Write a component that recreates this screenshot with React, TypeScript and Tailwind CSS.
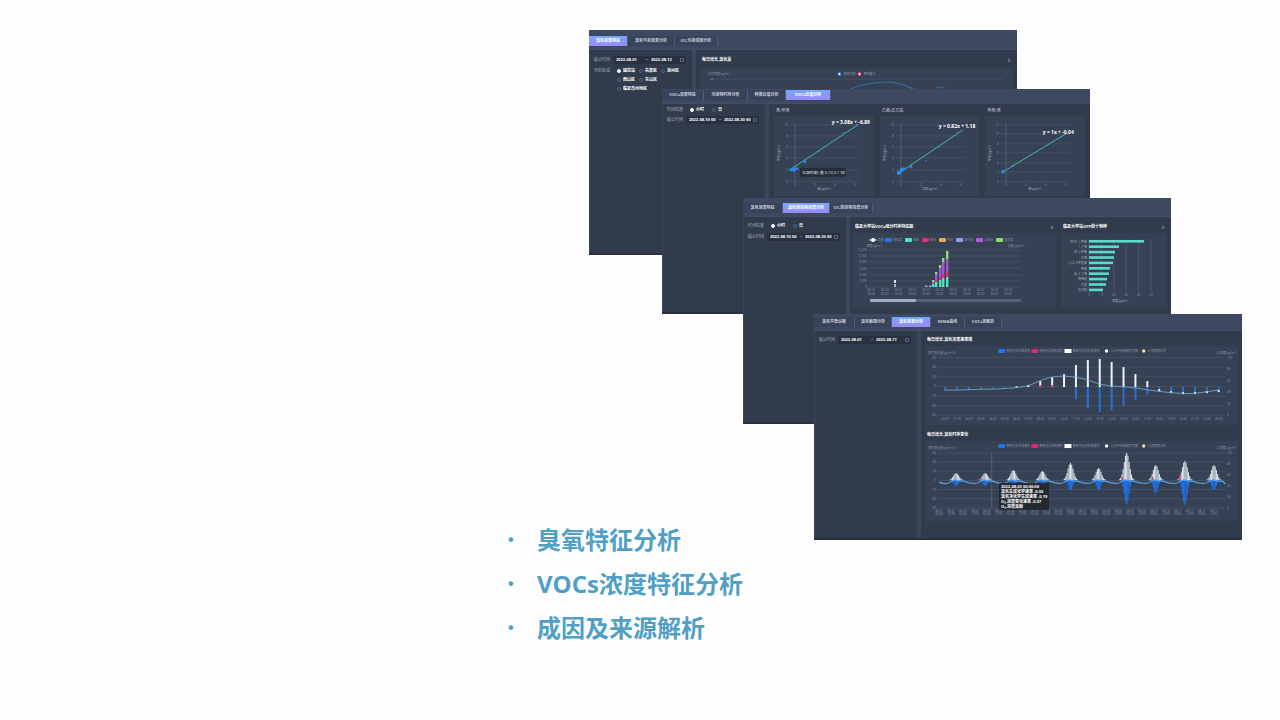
import React from 'react';

const topics = ['臭氧特征分析', 'VOCs浓度特征分析', '成因及来源解析'];

interface Tab {
  label: string;
  width: string;
}

interface WindowProps {
  /** Position of the window on the canvas */
  place: string;
  headPadding: string;
  sidebarSpacing: string;
  tabs: Tab[];
  active: number;
  sidebar: React.ReactNode;
  children: React.ReactNode;
}

/** One dashboard window: tab strip, filter sidebar and a chart area. */
const DashboardWindow: React.FC<WindowProps> = ({ place, headPadding, sidebarSpacing, tabs, active, sidebar, children }) => (
  <section className={`absolute flex w-[428px] flex-col overflow-hidden border-b-2 border-[#2a3040] bg-[#313b4c] text-[4px] leading-[8px] text-white ${place}`}>
    <header className={`border-b border-[#434d63] bg-[#3e4961] pb-[3px] ${headPadding}`}>
      <nav className="flex h-[10px]">
        {tabs.map((tab, i) => (
          <button
            key={tab.label}
            className={`h-full shrink-0 whitespace-nowrap border-r border-[#545c72] font-bold ${tab.width} ${
              i === active ? 'bg-linear-to-b from-[#6fa8fa] to-[#9c86f8]' : 'bg-[#38425a] text-[#c8cdd8]'
            }`}
          >
            {tab.label}
          </button>
        ))}
      </nav>
    </header>
    <div className="flex min-h-0 grow">
      <aside className={`flex w-[103px] shrink-0 flex-col border-l border-[#3b4559] pl-[4px] pr-[6px] ${sidebarSpacing}`}>{sidebar}</aside>
      <div className="w-[4px] shrink-0 bg-[#3d475a]" />
      <div className="min-w-0 grow">{children}</div>
    </div>
  </section>
);

interface DateRangeProps {
  id: string;
  label: string;
  from: string;
  to: string;
}

const DateRange: React.FC<DateRangeProps> = ({ id, label, from, to }) => (
  <div className="flex h-[12px] items-center gap-[3px]">
    <label htmlFor={id} className="w-[16px] shrink-0 text-[#a9b0bf]">{label}</label>
    <div className="flex h-[8px] grow items-center rounded-[1px] bg-[#293140] pl-[3px] font-bold">
      <input id={id} className="w-[30px] bg-transparent" defaultValue={from} />
      <span className="w-[5px] text-[#a9b0bf]">~</span>
      <input aria-label={`${label} 结束`} className="w-[29px] bg-transparent" defaultValue={to} />
      <svg viewBox="0 0 6 6" className="h-[4px] w-[4px]" fill="none" stroke="#7d879a">
        <rect x="1" y="1" width="4" height="4" />
      </svg>
    </div>
  </div>
);

interface RadioRowProps {
  name: string;
  label?: string;
  options: string[];
  checked?: number;
}

const RadioRow: React.FC<RadioRowProps> = ({ name, label, options, checked }) => (
  <div className="flex h-[9px] items-center gap-[6px]">
    <span className="w-[17px] shrink-0 whitespace-nowrap text-[#a9b0bf]">{label}</span>
    <div className="flex">
      {options.map((option, i) => (
        <label key={option} className="flex w-[22px] items-center gap-[2px] whitespace-nowrap font-bold">
          <input
            type="radio"
            name={name}
            defaultChecked={i === checked}
            className="h-[4px] w-[4px] shrink-0 appearance-none rounded-full border border-[#596377] checked:border-white checked:bg-white"
          />
          {option}
        </label>
      ))}
    </div>
  </div>
);

interface LabelProps {
  x: number;
  y: number;
  children: React.ReactNode;
  anchor?: 'start' | 'middle' | 'end';
  size?: number;
  fill?: string;
}

const Label: React.FC<LabelProps> = ({ x, y, children, anchor = 'start', size = 3, fill = '#8b94a6' }) => (
  <text x={x} y={y} fontSize={size} fill={fill} textAnchor={anchor} dominantBaseline="central">{children}</text>
);

const GridLines: React.FC<{ x1: number; x2: number; ys: number[] }> = ({ x1, x2, ys }) => (
  <g stroke="#4a5467" strokeWidth="0.8">
    {ys.map((y) => <line key={y} x1={x1} x2={x2} y1={y} y2={y} />)}
  </g>
);

const PanelTitle: React.FC<{ children: React.ReactNode; icon?: boolean }> = ({ children, icon }) => (
  <div className="flex h-[8px] items-center justify-between px-[2px]">
    <h2 className="whitespace-nowrap font-bold">{children}</h2>
    {icon && (
      <svg viewBox="0 0 6 6" className="h-[4px] w-[4px]" stroke="#8f99b5" fill="none">
        <path d="M3 0.5V4M1.5 2.5L3 4L4.5 2.5M1 5.5H5" />
      </svg>
    )}
  </div>
);

/* ---------- Ozone growth ---------- */

const OzoneChart: React.FC = () => (
  <svg viewBox="700 68 312 60" className="w-full bg-[#364153]">
    <Label x={708} y={74}>日均浓度(μg/m³)</Label>
    <GridLines x1={708} x2={1002} ys={[79, 90]} />
    <circle cx="712" cy="79" r="1" fill="#6d788c" />
    <circle cx="839" cy="74" r="1.5" fill="#fff" stroke="#3b63e8" />
    <Label x={843} y={74}>臭氧均值</Label>
    <circle cx="859" cy="74" r="1.5" fill="#fff" stroke="#d8326f" />
    <Label x={863} y={74}>臭氧最大</Label>
    <path d="M848 90C860 84 872 82 889 82C900 83 908 86 914 90M936 88Q940 86 944 88" fill="none" stroke="#2f6fae" strokeWidth="1" />
  </svg>
);

/* ---------- Scatter fits ---------- */

interface ScatterProps {
  title: string;
  formula: string;
  formulaAt: [number, number];
  ys: number[];
  fit: [number, number, number, number];
  points: [number, number, number][];
  xTitle: string;
  tip?: string;
}

const Scatter: React.FC<ScatterProps> = ({ title, formula, formulaAt, ys, fit, points, xTitle, tip }) => (
  <article className="min-w-0 grow basis-0">
    <h2 className="h-[9px] px-[2px] text-[#d3d7df]">{title}</h2>
    <svg viewBox="0 0 100 80" className="w-full bg-[#364153]">
      <GridLines x1={16} x2={86} ys={ys} />
      <line x1="21" x2="21" y1="8" y2="66" stroke="#5a657a" strokeWidth="0.8" />
      <line x1={fit[0]} y1={fit[1]} x2={fit[2]} y2={fit[3]} stroke="#45b9ad" strokeWidth="1" />
      {points.map(([x, y, r]) => <circle key={`${x}-${y}`} cx={x} cy={y} r={r} fill="#2b8af0" />)}
      {[0, 2, 4, 6].map((n) => <Label key={n} x={21 + n * 10} y={69} anchor="middle">{n}</Label>)}
      {ys.map((y, i) => <Label key={y} x={14} y={y} anchor="end">{(ys.length - 1 - i) * 2}</Label>)}
      <text transform="translate(6 37) rotate(-90)" fontSize="3" fill="#a9b0bf" textAnchor="middle">甲苯(μg/m³)</text>
      <Label x={50} y={73} anchor="middle" fill="#a9b0bf">{xTitle}</Label>
      <text x={formulaAt[0]} y={formulaAt[1]} fontSize="5" fontWeight="700" fill="#fff">{formula}</text>
      {tip && (
        <g>
          <rect x="26" y="52" width="46" height="9" rx="1" fill="#262d39" />
          <Label x={28} y={57} size={4} fill="#e4e7ec">{tip}</Label>
        </g>
      )}
    </svg>
  </article>
);

/* ---------- VOCs composition ---------- */

const vocSeries = [
  { name: '烷烃类', color: '#2b72ea', x: 885 },
  { name: '烯烃', color: '#4ee3c1', x: 905 },
  { name: '炔烃', color: '#dc2f74', x: 922 },
  { name: '芳烃', color: '#f0a850', x: 939 },
  { name: '卤代烃', color: '#8ea0e8', x: 956 },
  { name: '含氧烃', color: '#bf54e8', x: 976 },
  { name: '其他类', color: '#92dc6c', x: 996 },
];

// x, then heights of the teal, pink, purple and green parts
const vocBars = [
  [926, 1, 0, 1, 0],
  [930, 1, 0, 1, 0],
  [933, 3, 0, 2, 2],
  [936, 5, 2, 6, 2],
  [940, 7, 3, 9, 3],
  [943, 9, 4, 12, 4],
  [947, 10, 5, 13, 8],
];
const vocColors = ['#4ee3c1', '#dc2f74', '#a552d8', '#92dc6c'];

const VocChart: React.FC = () => (
  <svg viewBox="853 233 203 74" className="w-full bg-[#364153]">
    <line x1="869" x2="877" y1="240" y2="240" stroke="#fff" strokeWidth="0.8" />
    <circle cx="873" cy="240" r="2" fill="#fff" />
    <Label x={878} y={240}>总量</Label>
    {vocSeries.map((s) => (
      <g key={s.name}>
        <rect x={s.x} y="238" width="7" height="4" rx="1" fill={s.color} />
        <Label x={s.x + 8} y={240}>{s.name}</Label>
      </g>
    ))}
    <Label x={866} y={246}>浓度(μg/m³)</Label>
    <Label x={1024} y={246} anchor="end">总量(μg/m³)</Label>
    <GridLines x1={869} x2={1021} ys={[250, 256, 262, 268, 275, 281, 287]} />
    {[12000, 10000, 8000, 6000, 4000, 2000, 0].map((n, i) => (
      <Label key={n} x={867} y={250 + i * 6.2} anchor="end">{n.toLocaleString()}</Label>
    ))}
    <rect x="894" y="280" width="2" height="3" fill="#dfe3ea" />
    <rect x="894" y="284" width="2" height="3" fill="#a8b8b8" />
    {vocBars.map(([x, ...parts]) => {
      let base = 287;
      return parts.map((h, i) => {
        base -= h;
        return <rect key={`${x}-${i}`} x={x - 1} y={base} width="2.4" height={h} fill={vocColors[i]} />;
      });
    })}
    {Array.from({ length: 11 }, (_, i) => (
      <g key={i}>
        <Label x={871 + i * 13.7} y={290} anchor="middle">08-{19 + i}</Label>
        <Label x={871 + i * 13.7} y={294} anchor="middle">00:00</Label>
      </g>
    ))}
    <rect x="870" y="299" width="151" height="3" rx="1" fill="#566075" />
    <rect x="870" y="299" width="46" height="3" rx="1" fill="#a6abc9" />
  </svg>
);

const species = [
  { name: '间/对-二甲苯', value: 55 },
  { name: '1-丁烯', value: 30 },
  { name: '邻-二甲苯', value: 26 },
  { name: '乙烯', value: 25 },
  { name: '1,2,4-三甲基苯', value: 24 },
  { name: '甲苯', value: 21 },
  { name: '反-2-丁烯', value: 20 },
  { name: '丙烯醛', value: 18 },
  { name: '乙醛', value: 17 },
  { name: '异戊烷', value: 14 },
];

const SpeciesChart: React.FC = () => (
  <svg viewBox="1061 233 106 74" className="w-full bg-[#364153]">
    {Array.from({ length: 6 }, (_, i) => (
      <g key={i}>
        <line x1={1089 + i * 12.4} x2={1089 + i * 12.4} y1="239" y2="292" stroke="#4f5a6e" strokeWidth="0.8" />
        <Label x={1089 + i * 12.4} y={295} anchor="middle">{i * 10}</Label>
      </g>
    ))}
    {species.map((s, i) => (
      <g key={s.name}>
        <rect x="1089" y={240 + i * 5.4} width={s.value} height="2.6" fill="#58dcc6" />
        <Label x={1087} y={241.5 + i * 5.4} anchor="end" fill="#a9b0bf">{s.name}</Label>
      </g>
    ))}
    <Label x={1120} y={301} anchor="middle" fill="#a9b0bf">浓度(μg/m³)</Label>
  </svg>
);

/* ---------- Ozone cause analysis ---------- */

const causeLegend = [
  { name: '臭氧化学生成速率', x: 998, shape: 'pill', color: '#1f74f0' },
  { name: '臭氧化学消耗速率', x: 1031, shape: 'pill', color: '#d92b72' },
  { name: '臭氧净化学生成速率', x: 1064, shape: 'rect', color: '#fff' },
  { name: 'O₃水平传输速率贡献', x: 1104, shape: 'dot', color: '#fff' },
  { name: 'O₃浓度变化率', x: 1141, shape: 'dot', color: '#f3e38a' },
];

/** Legend, grid and y axes shared by the two cause charts; `top` is the first grid line. */
const CauseFrame: React.FC<{ top: number; step: number; legendY: number }> = ({ top, step, legendY }) => (
  <g>
    {causeLegend.map((item) => (
      <g key={item.name}>
        {item.shape === 'dot' ? (
          <circle cx={item.x + 2} cy={legendY} r="1.7" fill={item.color} />
        ) : (
          <rect x={item.x} y={legendY - 2} width="7" height="4" rx={item.shape === 'pill' ? 1.5 : 0} fill={item.color} />
        )}
        <Label x={item.x + (item.shape === 'dot' ? 6 : 8)} y={legendY}>{item.name}</Label>
      </g>
    ))}
    <Label x={928} y={legendY + 1.5}>速率变化量(μg/m³/h)</Label>
    <Label x={1235} y={legendY + 1.5} anchor="end">O₃浓度(μg/m³)</Label>
    <GridLines x1={938} x2={1224} ys={Array.from({ length: 7 }, (_, i) => top + i * step)} />
    {[60, 40, 20, 0, -20, -40, -60].map((n, i) => (
      <Label key={n} x={936} y={top + i * step} anchor="end">{n}</Label>
    ))}
    {[100, 80, 60, 40, 20, 0].map((n, i) => (
      <Label key={n} x={1226} y={top + i * step * 1.2}>{n}</Label>
    ))}
  </g>
);

// [upper, lower] extents around the zero line for each hour
const hourly = [
  [0, 3], [0, 3], [0, 3], [0, 2], [0, 2], [0, 1], [1, 1], [2, 0],
  [6, 0], [10, 0], [13, 0], [22, 12], [27, 21], [28, 25], [25, 23], [20, 19],
  [13, 13], [6, 7], [0, 3], [0, 5], [0, 6], [0, 6], [0, 5], [0, 4],
];

const HourlyChart: React.FC = () => (
  <svg viewBox="925 346 312 79" className="w-full bg-[#364153]">
    <CauseFrame top={357.5} step={9.6} legendY={351} />
    {hourly.map(([up, down], i) => {
      const x = 945 + i * 11.86;
      const evening = i > 17;
      return (
        <g key={i}>
          <rect x={x - 1} y={387 - up} width="2" height={up} fill="#eef1f5" />
          <rect x={x - 1} y="387" width="2" height={down} fill="#2b6fd6" />
          {evening && <rect x={x - 1} y={387 + down - 1} width="2" height="2" fill="#e4eefa" />}
          {(i === 8 || i === 9) && <rect x={x - 1} y="385" width="2" height="2" fill="#cc3a72" />}
          <Label x={x} y={419} anchor="middle">{String(i).padStart(2, '0')}:00</Label>
        </g>
      );
    })}
    <path
      d="M945 390C965 390 975 389 992 389C1010 388 1022 388 1032 384C1045 378 1052 376 1064 376C1080 377 1088 380 1099 384C1112 387 1124 386 1136 388C1155 391 1170 393 1187 393.5C1200 393 1208 391 1218 390"
      fill="none"
      stroke="#79b4d8"
      strokeWidth="0.8"
    />
  </svg>
);

// x of each daily peak with its height above and depth below zero
const days = [
  [956, 7, 6], [985, 7, 6], [1013, 10, 6], [1042, 9, 6], [1070, 17, 10],
  [1098, 12, 10], [1126, 27, 24], [1155, 15, 13], [1184, 19, 25], [1213, 15, 10],
];

const peakBars = days.flatMap(([x, up, down]) =>
  Array.from({ length: 13 }, (_, i) => {
    const d = i - 6;
    return { x: x + d * 1.2, up: up * Math.exp(-(d * d) / 10), down: down * Math.exp(-(d * d) / 7) };
  })
);

const trend = days
  .map(([x]) => `Q${x - 10} 487 ${x - 6} 484 T${x} 482 T${x + 7} 483`)
  .join('');

const SeriesChart: React.FC = () => (
  <svg viewBox="925 443 312 79" className="w-full bg-[#364153]">
    <CauseFrame top={455} step={9.1} legendY={448} />
    <line x1="991.5" x2="991.5" y1="455" y2="510" stroke="#66738a" strokeWidth="0.6" />
    {peakBars.map((b) => (
      <g key={b.x}>
        <rect x={b.x - 0.5} y={482 - b.up} width="1.1" height={b.up} fill="#dde2e9" />
        <rect x={b.x - 0.6} y="482" width="1.3" height={b.down} fill="#1f6fe0" />
      </g>
    ))}
    {[[980, 480], [1121, 479], [1151, 479], [1178, 477]].map(([x, y]) => (
      <rect key={x} x={x} y={y} width="1.6" height={482 - y} fill="#cc3a5c" />
    ))}
    <path d={`M939 484${trend}Q1223 483 1224 486`} fill="none" stroke="#58a6e6" strokeWidth="1.2" />
    {Array.from({ length: 24 }, (_, i) => (
      <g key={i}>
        <Label x={939 + i * 11.9} y={513} anchor="middle">08-{String(1 + Math.floor(i / 2)).padStart(2, '0')}</Label>
        <Label x={939 + i * 11.9} y={516} anchor="middle">{i % 2 ? '12:00' : '00:00'}</Label>
      </g>
    ))}
  </svg>
);

export default function App() {
  return (
    <main className="min-h-screen bg-[#fefefe] font-['Open_Sans','Noto_Sans_CJK_SC',sans-serif]">
      <div className="mx-auto w-full max-w-[1280px]">
        <div className="relative h-[518px]">
          <DashboardWindow
            place="left-[589px] top-[30px] h-[225px]"
            headPadding="pt-[6px]"
            sidebarSpacing="pt-[4px]"
            active={0}
            tabs={[
              { label: '臭氧浓度特征', width: 'w-[39px]' },
              { label: '臭氧气象因素分析', width: 'w-[47px]' },
              { label: 'O3-污染成因分析', width: 'w-[43px]' },
            ]}
            sidebar={
              <>
                <DateRange id="range-ozone" label="起止时间" from="2022-08-01" to="2022-08-12" />
                <RadioRow name="site" label="分析区域" options={['国控站', '先锋区', '凉州区']} checked={0} />
                <RadioRow name="site" options={['西山区', '东山区']} />
                <RadioRow name="site" options={['临夏市州地区']} />
              </>
            }
          >
            <div className="flex flex-col gap-[4px] px-[4px] pt-[6px]">
              <PanelTitle icon>每日增长-臭氧量</PanelTitle>
              <OzoneChart />
            </div>
          </DashboardWindow>

          <DashboardWindow
            place="left-[662px] top-[89px] h-[225px]"
            headPadding="pt-[1px]"
            sidebarSpacing="pt-[1px]"
            active={3}
            tabs={[
              { label: 'VOCs浓度特征', width: 'w-[42px]' },
              { label: '污染物时序分析', width: 'w-[44px]' },
              { label: '种类比值分析', width: 'w-[38px]' },
              { label: 'VOCs比值分析', width: 'w-[45px]' },
            ]}
            sidebar={
              <>
                <RadioRow name="grain-ratio" label="时间粒度" options={['小时', '日']} checked={0} />
                <DateRange id="range-ratio" label="起止时间" from="2022-08-10 00" to="2022-08-30 00" />
              </>
            }
          >
            <div className="flex gap-[6px] px-[5px] pt-[3px]">
              <Scatter
                title="苯/甲苯"
                formula="y = 3.08x + -6.89"
                formulaAt={[58, 8]}
                ys={[9, 20, 31, 42, 54, 66]}
                fit={[16, 54, 84, 9]}
                points={[[17, 54, 1.5], [20, 54, 2], [23, 53, 1.5], [31, 46, 1.5], [45, 35, 0.8], [58, 26, 0.8], [70, 17, 0.8], [83, 9, 1]]}
                xTitle="苯(μg/m³)"
                tip="记录时刻: 值 0.72,0.1 98"
              />
              <Scatter
                title="乙烯/正乙烷"
                formula="y = 0.82x + 1.18"
                formulaAt={[59, 12]}
                ys={[9, 20, 31, 42, 54, 66]}
                fit={[18, 58, 83, 14]}
                points={[[19, 57, 2.2], [22, 54, 2], [31, 51, 1.5], [24, 53, 1.5], [46, 45, 0.8], [58, 31, 1]]}
                xTitle="乙烷(μg/m³)"
              />
              <Scatter
                title="甲苯/苯"
                formula="y = 1x + -0.04"
                formulaAt={[58, 18]}
                ys={[9, 18, 28, 37, 47, 56, 66]}
                fit={[18, 56, 81, 18]}
                points={[[18, 56, 1.8], [28, 50, 1.2], [45, 40, 0.5]]}
                xTitle="苯(μg/m³)"
              />
            </div>
          </DashboardWindow>

          <DashboardWindow
            place="left-[743px] top-[198px] h-[226px]"
            headPadding="pt-[5px]"
            sidebarSpacing="gap-[1px] pt-[4px]"
            active={1}
            tabs={[
              { label: '臭氧浓度特征', width: 'w-[40px]' },
              { label: '臭氧前体物浓度分析', width: 'w-[47px]' },
              { label: 'O3-前体物浓度分析', width: 'w-[43px]' },
            ]}
            sidebar={
              <>
                <RadioRow name="grain-voc" label="时间粒度" options={['小时', '日']} checked={0} />
                <DateRange id="range-voc" label="起止时间" from="2022-08-10 00" to="2022-08-30 00" />
              </>
            }
          >
            <div className="flex gap-[5px] px-[3px] pt-[6px]">
              <div className="flex w-[203px] flex-col gap-[2px]">
                <PanelTitle icon>临夏大学站VOCs组分时序特征图</PanelTitle>
                <VocChart />
              </div>
              <div className="flex w-[106px] flex-col gap-[2px]">
                <PanelTitle icon>临夏大学站OFP前十物种</PanelTitle>
                <SpeciesChart />
              </div>
            </div>
          </DashboardWindow>

          <DashboardWindow
            place="left-[814px] top-[314px] h-[226px]"
            headPadding="pt-[3px]"
            sidebarSpacing="pt-[3px]"
            active={2}
            tabs={[
              { label: '臭氧平衡诊断', width: 'w-[41px]' },
              { label: '臭氧敏感分析', width: 'w-[37px]' },
              { label: '臭氧来源分析', width: 'w-[39px]' },
              { label: 'EKMA曲线', width: 'w-[34px]' },
              { label: 'VOCs源解析', width: 'w-[37px]' },
            ]}
            sidebar={<DateRange id="range-cause" label="起止时间" from="2022-08-01" to="2022-08-11" />}
          >
            <div className="flex flex-col gap-[2px] px-[4px] pt-[5px]">
              <PanelTitle>每日增长-臭氧浓度速率榜</PanelTitle>
              <HourlyChart />
              <div className="mt-[4px] flex flex-col gap-[2px]">
                <PanelTitle>每日增长-臭氧时序变化</PanelTitle>
                <SeriesChart />
              </div>
            </div>
            <div className="absolute left-[185px] top-[169px] rounded-[1px] bg-[#22262e]/90 px-[2px] py-[1px] font-bold leading-[5px] whitespace-nowrap">
              <p>2022-08-03 00:00:00</p>
              <p>臭氧生成化学速率 -0.00</p>
              <p>臭氧净化学生成速率 -0.19</p>
              <p>O₃-浓度变化速率 -0.07</p>
              <p>O₃-浓度贡献</p>
            </div>
          </DashboardWindow>
        </div>

        <ul className="ml-[508px] text-[24px] font-bold leading-[44px] text-[#519fc5]">
          {topics.map((topic) => (
            <li key={topic} className="flex">
              <span className="w-[29px] shrink-0 font-['Liberation_Sans'] text-[16px]">•</span>
              {topic}
            </li>
          ))}
        </ul>
      </div>
    </main>
  );
}
